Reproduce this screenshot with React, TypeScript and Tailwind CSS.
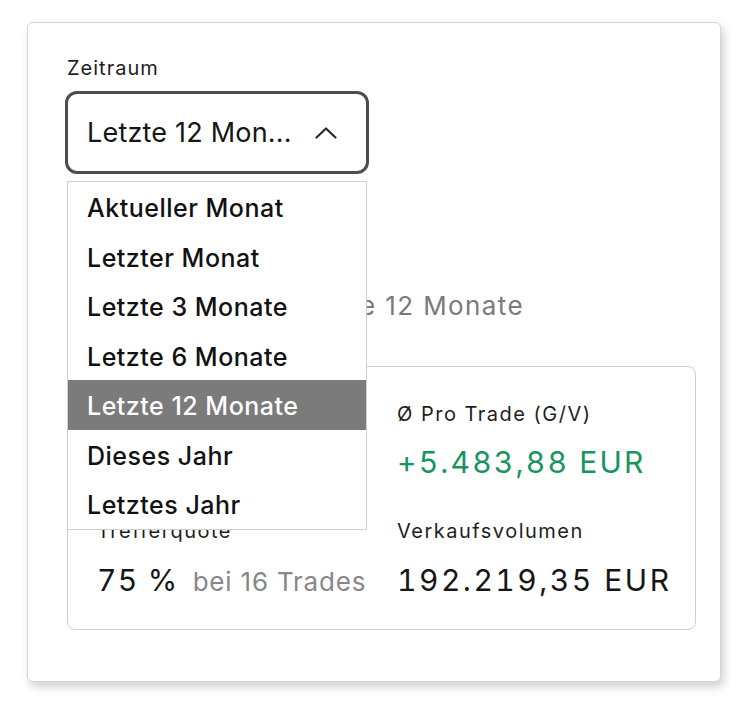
import React from "react";

const options = [
  "Aktueller Monat",
  "Letzter Monat",
  "Letzte 3 Monate",
  "Letzte 6 Monate",
  "Letzte 12 Monate",
  "Dieses Jahr",
  "Letztes Jahr",
];

function ChevronUp() {
  return (
    <svg width="22" height="12" viewBox="0 0 22 12" fill="none" className="block">
      <polyline points="1.5,10.5 11,1.5 20.5,10.5" stroke="#2b2b2b" strokeWidth="2.2" strokeLinecap="round" strokeLinejoin="round" />
    </svg>
  );
}

function Label({ children }: { children: React.ReactNode }) {
  return <div className="text-[20px] leading-[28px] tracking-[1.5px] text-[#1e1e1e]">{children}</div>;
}

export default function App() {
  const selected = "Letzte 12 Monate";
  return (
    <div className="min-h-[721px] bg-white pl-[27px] pt-[22px] font-['Inter',sans-serif]">
      <div className="box-border h-[660px] w-[694px] rounded-[6px] border border-[#d6d6d6] bg-white pl-[39px] pr-[24px] pt-[31px] shadow-[3px_5px_10px_rgba(0,0,0,0.18)]">
        <div className="text-[20px] leading-[28px] tracking-[1px] text-[#1e1e1e]">Zeitraum</div>

        <div className="relative mt-[9px]">
          <div className="-ml-[2px] box-border flex h-[83px] w-[304px] items-center rounded-[12px] border-[3px] border-[#4d4d4d] bg-white pl-[19px] pr-[29px]">
            <span className="text-[27px] leading-[34px] tracking-[0.2px] text-[#161616]">Letzte 12 Mon...</span>
            <span className="ml-auto">
              <ChevronUp />
            </span>
          </div>

          <ul className="absolute left-0 top-[90px] z-10 box-border w-[300px] border border-[#cfcfcf] bg-white">
            {options.map((o) => (
              <li
                key={o}
                className={
                  o === selected
                    ? "flex h-[49.5px] items-center bg-[#7b7b7b] pl-[19px] pt-[4px] text-[25px] font-medium tracking-[0.5px] text-white"
                    : "flex h-[49.5px] items-center pl-[19px] pt-[4px] text-[25px] font-medium tracking-[0.5px] text-[#111111]"
                }
              >
                {o}
              </li>
            ))}
          </ul>
        </div>

        <div className="mt-[115px] w-[457px] text-right text-[26px] leading-[34px] tracking-[1.4px] text-[#7a7a7a]">
          Letzte 12 Monate
        </div>

        <div className="mt-[43px] box-border grid w-[629px] grid-cols-[270px_1fr] gap-x-[30px] gap-y-[37px] rounded-[8px] border border-[#d0d0d0] pb-[29px] pl-[29px] pt-[33px]">
          <div className="h-[80px]" />
          <div>
            <Label>Ø Pro Trade (G/V)</Label>
            <div className="mt-[16px] text-[30px] leading-[36px] tracking-[2.2px] tabular-nums text-[#16965e]">+5.483,88 EUR</div>
          </div>
          <div>
            <Label>Trefferquote</Label>
            <div className="mt-[17px] flex items-baseline whitespace-nowrap">
              <span className="text-[30px] leading-[36px] tracking-[1.3px] tabular-nums text-[#161616]">75 %</span>
              <span className="ml-[14px] text-[26px] leading-[36px] tracking-[0.8px] text-[#878787]">bei 16 Trades</span>
            </div>
          </div>
          <div>
            <Label>Verkaufsvolumen</Label>
            <div className="mt-[17px] text-[30px] leading-[36px] tracking-[2.5px] tabular-nums text-[#161616]">192.219,35 EUR</div>
          </div>
        </div>
      </div>
    </div>
  );
}
